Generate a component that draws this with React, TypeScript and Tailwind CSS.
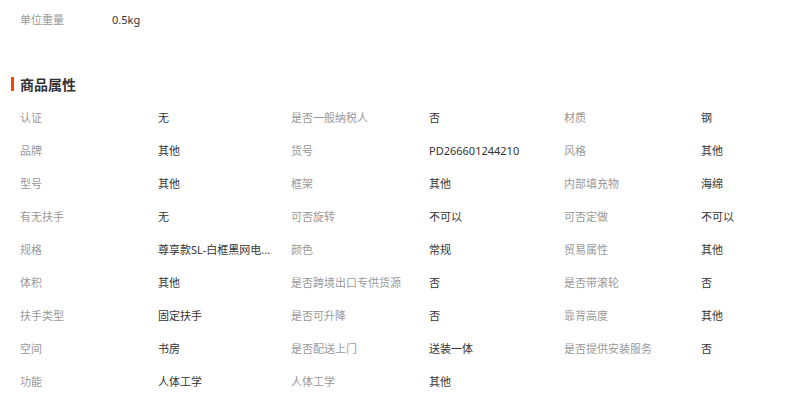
const FONT = "font-['Noto_Sans','Noto_Sans_CJK_SC',sans-serif]";

const ATTRS: [string, string][] = [
  ["认证", "无"],
  ["是否一般纳税人", "否"],
  ["材质", "钢"],
  ["品牌", "其他"],
  ["货号", "PD266601244210"],
  ["风格", "其他"],
  ["型号", "其他"],
  ["框架", "其他"],
  ["内部填充物", "海绵"],
  ["有无扶手", "无"],
  ["可否旋转", "不可以"],
  ["可否定做", "不可以"],
  ["规格", "尊享款SL-白框黑网电..."],
  ["颜色", "常规"],
  ["贸易属性", "其他"],
  ["体积", "其他"],
  ["是否跨境出口专供货源", "否"],
  ["是否带滚轮", "否"],
  ["扶手类型", "固定扶手"],
  ["是否可升降", "否"],
  ["靠背高度", "其他"],
  ["空间", "书房"],
  ["是否配送上门", "送装一体"],
  ["是否提供安装服务", "否"],
  ["功能", "人体工学"],
  ["人体工学", "其他"],
];

export default function App() {
  return (
    <div className={`w-[800px] h-[399px] overflow-hidden bg-white ${FONT} text-[11px]`}>
      <div className="pt-[4px] pl-[20px]">
        <div className="flex h-[33px] items-center">
          <span className="w-[92px] text-[#999]">单位重量</span>
          <span className="text-[#333]">0.5kg</span>
        </div>
      </div>

      <div className="mt-[37px] flex h-[20px] items-center gap-[6px] pl-[11px]">
        <span className="h-[14px] w-[3px] bg-[#ff4400]" />
        <h3 className="text-[14px] font-bold text-[#333]">商品属性</h3>
      </div>

      <div className="mt-[8px] grid grid-cols-[138px_133px_138px_135px_137px_1fr] pl-[20px]">
        {ATTRS.map(([k, v]) => (
          <div key={k} className="contents">
            <div className="flex h-[33px] items-center whitespace-nowrap text-[#999]">{k}</div>
            <div className="flex h-[33px] items-center whitespace-nowrap text-[#333]">{v}</div>
          </div>
        ))}
      </div>
    </div>
  );
}
